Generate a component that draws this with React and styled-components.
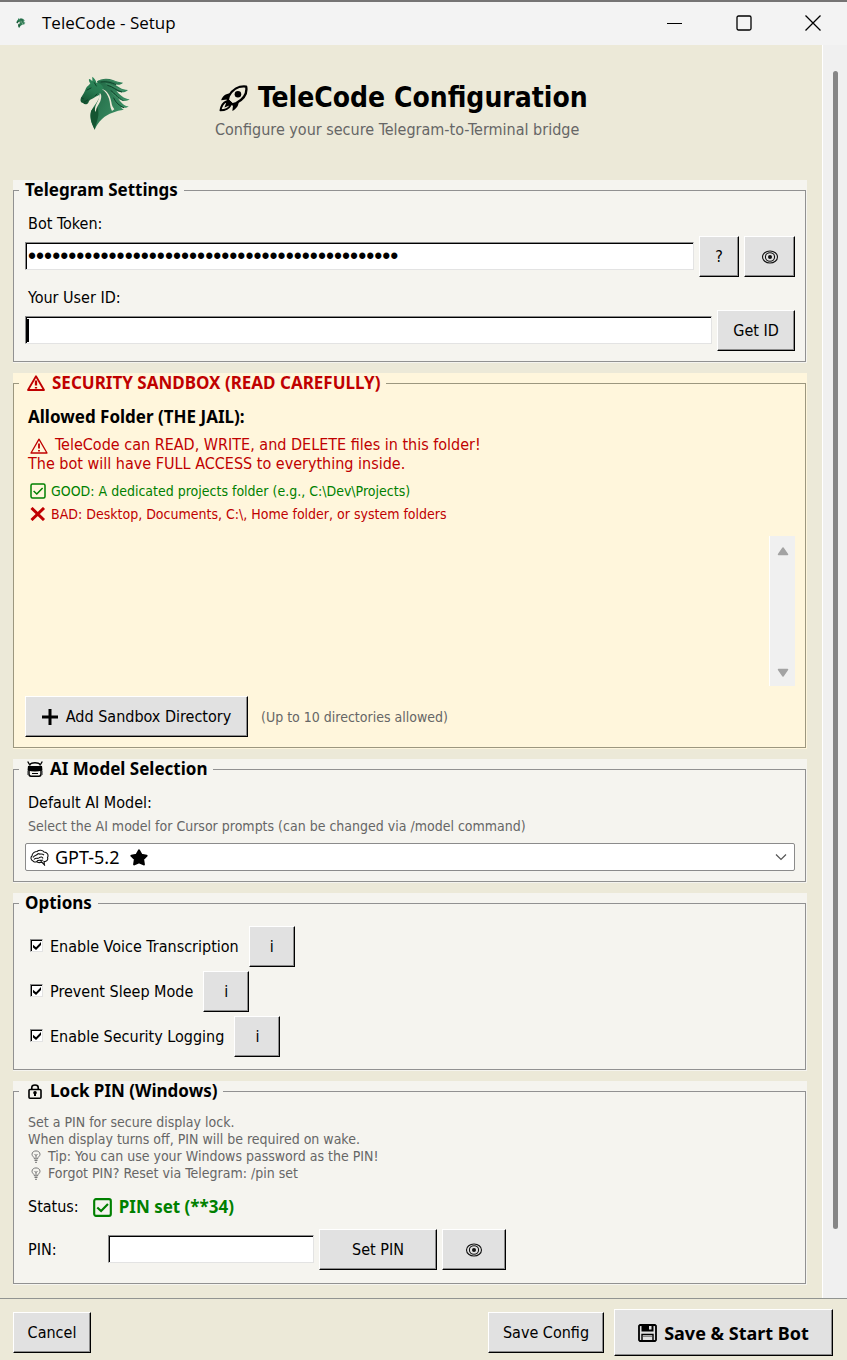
import React from "react";
import styled, { createGlobalStyle, css } from "styled-components";

const uiFont = `"DejaVu Sans Condensed", "DejaVu Sans", sans-serif`;
const boldFont = `"Noto Sans", "Open Sans", sans-serif`;

const GlobalStyle = createGlobalStyle`
  *, *::before, *::after { box-sizing: border-box; }
  html, body { margin: 0; padding: 0; }
  body {
    background: #ece9d8;
    color: #000;
    font-family: ${uiFont};
    font-size: 16px;
    line-height: 20px;
  }
  svg { display: block; flex: none; }
`;

const Window = styled.div`
  min-height: 100vh;
  display: flex;
  flex-direction: column;
`;

const TitleBar = styled.header`
  display: flex;
  align-items: center;
  height: 45px;
  padding: 0 24px 2px 16px;
  border-top: 2px solid #757474;
  background: #f3f3f3;
`;

const WindowTitle = styled.span`
  flex: 1;
  margin-left: 16px;
  font-family: "Open Sans", sans-serif;
  font-size: 17px;
  line-height: 24px;
`;

const WindowButtons = styled.div`
  display: flex;
  gap: 49px;
`;

const CaptionButton = styled.button`
  padding: 0;
  border: 0;
  background: none;
  width: 20px;
  height: 20px;
  display: grid;
  place-items: center;
`;

const Body = styled.div`
  flex: 1;
  display: flex;
`;

const Content = styled.main`
  flex: 1;
  min-width: 0;
  display: flex;
  flex-direction: column;
  gap: 10px;
  padding: 0 15px 13px 13px;
`;

const PageTrack = styled.div`
  display: flex;
  width: 25px;
  padding: 26px 9px 69px 10px;
  border-left: 1px solid #fff;
  background: #f0f0f0;
`;

const PageThumb = styled.div`
  flex: 1;
  border-radius: 3px;
  background: #868686;
`;

const Intro = styled.div`
  display: flex;
  gap: 84px;
  height: 125px;
  padding: 31px 0 0 66px;
`;

const Heading = styled.div`
  display: flex;
  flex-direction: column;
  gap: 5px;
  padding-top: 5px;
`;

const PageTitle = styled.h1`
  display: flex;
  align-items: center;
  gap: 10px;
  margin: 0 0 0 4px;
  font: bold 28px/34px ${uiFont};
  white-space: nowrap;
`;

const Subtitle = styled.p`
  margin: 0;
  color: #666;
  white-space: nowrap;
`;

const Panel = styled.section`
  padding: 0 1px 1px 0;
  background: ${(p) => (p.$warn ? "#fff6dc" : "#f5f4ef")};
`;

const Group = styled.fieldset`
  min-width: 0;
  margin: 0;
  padding: ${(p) => p.$top || 14}px 10px ${(p) => p.$bottom || 10}px 11px;
  border: 1px solid ${(p) => (p.$warn ? "#9c977f" : "#919191")};
`;

const Legend = styled.legend`
  display: flex;
  align-items: center;
  gap: 7px;
  height: 20px;
  margin-left: -6px;
  padding: 0 6px 0 ${(p) => (p.$icon ? 8 : 6)}px;
  font: bold 17px/20px ${boldFont};
  color: ${(p) => (p.$warn ? "#c00000" : "#000")};
`;

const FieldLabel = styled.label`
  display: block;
  margin: ${(p) => p.$top || 0}px 0 2px 3px;
`;

const StrongLabel = styled.p`
  margin: 0 0 8px 3px;
  font: bold 17px/20px ${boldFont};
`;

const FieldRow = styled.div`
  display: flex;
  align-items: center;
  gap: 5px;
  margin-top: ${(p) => p.$top || 0}px;
`;

const TextInput = styled.input`
  flex: ${(p) => (p.$width ? "none" : "1")};
  width: ${(p) => (p.$width ? p.$width + "px" : "auto")};
  min-width: 0;
  height: 28px;
  margin-bottom: 1px;
  padding: 0 2px;
  border: 1px solid;
  border-color: #8a8a8a #e3e3e3 #e3e3e3 #8a8a8a;
  border-radius: 0;
  background: #fff;
  box-shadow: inset 1px 1px 0 #000;
  font: 23px/24px "Liberation Sans", sans-serif;
  color: #000;
  outline: none;
`;

const CaretField = styled.div`
  flex: 1;
  display: flex;
  position: relative;
  &::after {
    content: "";
    position: absolute;
    left: 1px;
    top: 3px;
    bottom: 3px;
    width: 3px;
    background: #000;
  }
`;

const Button = styled.button`
  flex: none;
  display: flex;
  align-items: center;
  justify-content: center;
  gap: ${(p) => p.$gap || 0}px;
  width: ${(p) => p.$width}px;
  height: 41px;
  padding: 0;
  border: 1px solid;
  border-color: #fff #000 #000 #fff;
  border-radius: 0;
  background: #e1e1e1;
  box-shadow: inset -1px -1px 0 #8c8c8c;
  font: 16px/20px ${uiFont};
  color: #000;
  white-space: nowrap;
  ${(p) =>
    p.$primary &&
    css`
      height: 47px;
      font: bold 18px/24px ${boldFont};
    `}
`;

const Warning = styled.p`
  margin: 0 0 8px 3px;
  line-height: 19px;
  color: #c00000;
`;

const InlineIcon = styled.span`
  display: inline-block;
  vertical-align: -4px;
  margin: 0 7px 0 2px;
`;

const Advice = styled.p`
  display: flex;
  align-items: center;
  gap: 5px;
  margin: 0 0 3px 5px;
  font-size: 14px;
  color: ${(p) => p.$color};
`;

const FolderList = styled.div`
  display: flex;
  justify-content: flex-end;
  height: 150px;
  margin: 12px 0 10px;
`;

const ListTrack = styled.div`
  display: flex;
  flex-direction: column;
  align-items: center;
  justify-content: space-between;
  width: 26px;
  padding: 10px 0 8px;
  border-left: 1px solid #fff;
  background: #f0f0f0;
`;

const Hint = styled.span`
  margin-left: ${(p) => p.$left || 0}px;
  font-size: 14px;
  color: #666;
`;

const HintBlock = styled.p`
  margin: ${(p) => p.$top || 0}px 0 ${(p) => p.$bottom}px 3px;
  font-size: 14px;
  line-height: 17px;
  color: #666;
`;

const TipLine = styled.span`
  display: flex;
  align-items: center;
  gap: 7px;
  padding-left: 3px;
`;

const SelectBox = styled.div`
  position: relative;
  display: flex;
`;

const Select = styled.select`
  appearance: none;
  flex: 1;
  height: 28px;
  padding: 0 30px 0 29px;
  border: 1px solid #8b8b8b;
  border-radius: 2px;
  background: #fff;
  font: 18px/24px ${boldFont};
  color: #000;
`;

const SelectIcon = styled.span`
  position: absolute;
  top: 6px;
  ${(p) => (p.$right ? `right: ${p.$right}px;` : `left: ${p.$left}px;`)}
  pointer-events: none;
`;

const OptionList = styled.div`
  display: flex;
  flex-direction: column;
  gap: 4px;
`;

const OptionRow = styled.div`
  display: flex;
  align-items: center;
  gap: 10px;
  padding-left: 5px;
`;

const OptionLabel = styled.label`
  display: flex;
  align-items: center;
  gap: 7px;
`;

const Checkbox = styled.input`
  appearance: none;
  flex: none;
  width: 13px;
  height: 13px;
  margin: 0 0 2px;
  border: 1px solid;
  border-color: #8a8a8a #e3e3e3 #e3e3e3 #8a8a8a;
  box-shadow: inset 1px 1px 0 #000;
  background: #fff;
  display: grid;
  place-items: center;
  &:checked::after {
    content: "";
    width: 8px;
    height: 8px;
    margin: 1px 0 0 1px;
    background: #000;
    clip-path: polygon(0 35%, 38% 65%, 100% 0, 100% 38%, 38% 100%, 0 70%);
  }
`;

const StatusRow = styled.div`
  display: flex;
  align-items: center;
  margin: 0 0 12px 3px;
`;

const StatusValue = styled.strong`
  display: flex;
  align-items: center;
  gap: 7px;
  margin-left: 14px;
  font: bold 17px/20px ${boldFont};
  color: #008000;
`;

const PinLabel = styled.label`
  width: 75px;
  margin-left: 3px;
`;

const Footer = styled.footer`
  display: flex;
  align-items: center;
  gap: 10px;
  padding: 10px 14px 4px 13px;
  border-top: 1px solid #919491;
`;

const Spacer = styled.div`
  flex: 1;
`;

function Horse({ size = 52 }) {
  return (
    <svg width={size} height={Math.round(size * 1.04)} viewBox="0 0 156 162" aria-hidden="true">
      <defs>
        <linearGradient id="coat" x1="0.7" y1="0" x2="0.3" y2="1">
          <stop offset="0" stopColor="#2e8a5c" />
          <stop offset="0.5" stopColor="#277a50" />
          <stop offset="1" stopColor="#145431" />
        </linearGradient>
        <linearGradient id="mane" x1="0" y1="0" x2="1" y2="0.6">
          <stop offset="0" stopColor="#1c6240" />
          <stop offset="1" stopColor="#3f9468" />
        </linearGradient>
      </defs>
      <path
        fill="url(#mane)"
        d="M54 16C66 7 86 6 102 12C112 16 122 19 132 20C126 27 116 28 104 24C116 30 128 42 147 42C138 52 124 50 112 44C122 56 134 68 152 70C142 78 130 76 118 68C126 80 136 90 149 91C143 97 134 96 126 94C130 98 132 101 135 101C112 104 88 112 70 128C59 138 52 148 47 161C42 149 34 138 34 118C36 96 52 86 62 62L60 40Z"
      />
      <path
        fill="url(#coat)"
        d="M40 2C46 7 51 12 52 20C66 22 74 30 74 42C70 50 66 52 62 56C58 58 52 60 44 66C36 70 30 72 28 80C24 86 16 86 12 81C5 80 3 72 6 65C12 56 18 46 21 37C24 31 31 27 34 22C30 18 29 12 30 9C34 10 37 13 40 15C41 11 39 6 40 2Z"
      />
      <path fill="#145431" d="M36 105C46 90 58 86 58 108C60 122 52 140 47 161C40 146 32 130 36 105Z" />
      <path fill="#ece9d8" d="M62 52C68 54 68 64 64 76C58 88 52 94 50 108C44 98 52 84 57 74C60 66 62 60 62 52Z" />
      <path fill="#ece9d8" d="M68 38C86 44 94 60 97 78C98 88 102 94 106 100L99 105C92 92 94 80 90 68C86 56 80 46 68 38Z" />
      <path
        fill="none"
        stroke="#10422a"
        strokeWidth="3"
        strokeLinecap="round"
        d="M24 42L36 36M8 66L13 68M16 78L26 72M66 18C84 15 98 20 110 26M86 28C104 32 110 44 128 48M96 44C108 52 112 64 132 73M104 66C110 80 122 90 134 95M46 20L52 30M48 60L54 54"
      />
      <path fill="none" stroke="#66b48a" strokeWidth="1" d="M60 14C80 8 100 14 118 20M80 22C100 26 118 42 134 44M98 50C112 66 126 72 140 72" />
    </svg>
  );
}

function Rocket() {
  return (
    <svg width="29" height="27" viewBox="0 0 87 82" aria-hidden="true">
      <path d="M82 5C60 2 40 14 29 34L26 46L40 59L52 55C72 44 86 26 82 5Z" fill="none" stroke="#000" strokeWidth="7" strokeLinejoin="round" />
      <circle cx="57" cy="28" r="10" />
      <path d="M34 26C20 26 10 34 6 46L24 44L42 62L40 79C52 72 60 62 59 50L42 58L27 44Z" />
      <path d="M22 50C10 54 6 66 4 77C16 77 28 74 34 62Z" fill="none" stroke="#000" strokeWidth="6" strokeLinejoin="round" />
      <path d="M26 42L16 68L42 58Z" />
    </svg>
  );
}

function Eye() {
  return (
    <svg width="18" height="14" viewBox="0 0 18 14" fill="none" stroke="#111" aria-hidden="true">
      <ellipse cx="9" cy="7" rx="7.500" ry="6" strokeWidth="1.100" />
      <ellipse cx="9" cy="7" rx="4.600" ry="4.200" strokeWidth="1.100" />
      <circle cx="9" cy="7" r="2" fill="#111" stroke="none" />
    </svg>
  );
}

function Alert({ weight = 1.3 }) {
  return (
    <svg width="18" height="16" viewBox="0 0 18 16" fill="none" stroke="#c00000" aria-hidden="true">
      <path d="M9 1.2L17 15H1Z" strokeWidth={weight} strokeLinejoin="round" />
      <path d="M9 5.5V10.5M9 12V13.6" strokeWidth={weight + 0.5} />
    </svg>
  );
}

function CheckedBox({ size = 16, weight = 1.5 }) {
  return (
    <svg width={size} height={size} viewBox="0 0 16 16" fill="none" stroke="#008000" strokeWidth={weight} aria-hidden="true">
      <rect x="1" y="1" width="14" height="14" rx="1.5" />
      <path d="M3.6 8L6.8 11L12.6 5" />
    </svg>
  );
}

function Cross() {
  return (
    <svg width="16" height="14" viewBox="0 0 16 14" stroke="#c00000" strokeWidth="3" aria-hidden="true">
      <path d="M1.5 1L14 13M14 1L1.5 13" />
    </svg>
  );
}

function Plus() {
  return (
    <svg width="16" height="16" viewBox="0 0 16 16" stroke="#000" strokeWidth="3" aria-hidden="true">
      <path d="M8 0V16M0 8H16" />
    </svg>
  );
}

function Robot() {
  return (
    <svg width="16" height="16" viewBox="0 0 16 16" aria-hidden="true">
      <path d="M0.700 0.500L2.500 3.500M15.300 0.500L13.500 3.500" stroke="#000" strokeWidth="1.300" />
      <path d="M2.500 4.500C3.500 0.800 12.500 0.800 13.500 4.500" fill="none" stroke="#000" strokeWidth="1.500" />
      <path d="M1 5H15L15.500 9.500Q8 11.500 0.500 9.500Z" />
      <path d="M2 9V13Q2 15.200 4 15.200H12Q14 15.200 14 13V9" fill="none" stroke="#000" strokeWidth="1.500" />
      <path d="M5 12.500H11" stroke="#000" />
      <path d="M0.500 10V14M15.500 10V14" stroke="#888" />
    </svg>
  );
}

function Brain() {
  return (
    <svg width="19" height="17" viewBox="0 0 19 17" fill="none" stroke="#111" strokeWidth="1.1" aria-hidden="true">
      <path d="M3 12C0.500 11 0.500 8 2 7C2 4 5 2.500 7 2.500C9 0.500 13 1 14 3C17 3 19 6 17.500 8.500C18.500 11 16 13 14 12.500L14.500 16L11.500 12.800C9 14.500 7 13 7 12.500C5 13.500 3.500 13 3 12Z" />
      <path d="M3 8.500C5 5.500 7 7 8 4.500M8 4.500C10 6 11.500 4 14 6M4 10.500C6 8 8 10.500 9.500 8.500C11 7.500 12.500 8 13 9.500M7 12C9 10.500 11 12 13 11" />
    </svg>
  );
}

function Star() {
  return (
    <svg width="18" height="17" viewBox="0 0 18 17" aria-hidden="true">
      <path d="M9 1.500L11.400 5.800L16.500 6.800L13 10.200L13.800 15.300L9 13.200L4.200 15.300L5 10.200L1.500 6.800L6.600 5.800Z" stroke="#000" strokeWidth="2.200" strokeLinejoin="round" />
    </svg>
  );
}

function Chevron() {
  return (
    <svg width="12" height="16" viewBox="0 0 12 16" fill="none" stroke="#555" strokeWidth="1.200" aria-hidden="true">
      <path d="M1 5.500L6 10.500L11 5.500" />
    </svg>
  );
}

function Padlock() {
  return (
    <svg width="16" height="15" viewBox="0 0 16 15" fill="none" stroke="#000" strokeWidth="1.600" aria-hidden="true">
      <rect x="2" y="5.500" width="12" height="8.700" rx="1" />
      <path d="M4.800 5.500V3.500C4.800 0.200 11.200 0.200 11.200 3.500V5.500" />
      <path d="M8 8V12" strokeWidth="2" />
      <circle cx="8" cy="8.800" r="1" fill="#000" />
    </svg>
  );
}

function Bulb() {
  return (
    <svg width="10" height="13" viewBox="0 0 10 13" fill="none" stroke="#777" strokeWidth="1" aria-hidden="true">
      <path d="M3.500 9C3.500 7 1 6.500 1 4.300C1 -0.200 9 -0.200 9 4.300C9 6.500 6.500 7 6.500 9Z" />
      <path d="M5 9V5M3.500 4L5 5.500L6.500 4M3.500 10.500H6.500M4 12.300H6" />
    </svg>
  );
}

function Floppy() {
  return (
    <svg width="19" height="18" viewBox="0 0 19 18" aria-hidden="true">
      <path d="M2 1H17L18 2V16L17 17H2L1 16V2Z" fill="#e1e1e1" stroke="#000" strokeWidth="1.800" strokeLinejoin="round" />
      <path d="M3.500 1H15.500V7.500H3.500Z" />
      <rect x="11" y="2" width="2.500" height="3.500" fill="#e1e1e1" />
      <path d="M4 17V10.500H15V17" fill="none" stroke="#000" strokeWidth="1.400" />
      <path d="M5 12.500H14" stroke="#888" />
    </svg>
  );
}

function Arrow({ down }) {
  return (
    <svg width="12" height="10" viewBox="0 0 12 10" aria-hidden="true">
      <path d={down ? "M1.500 1.500H10.500L6 8Z" : "M1.500 8.500H10.500L6 2Z"} fill="#a3a3a3" stroke="#a3a3a3" strokeWidth="1.500" strokeLinejoin="round" />
    </svg>
  );
}

const options = [
  { id: "voice", label: "Enable Voice Transcription" },
  { id: "sleep", label: "Prevent Sleep Mode" },
  { id: "logging", label: "Enable Security Logging" },
];

export default function App() {
  return (
    <Window>
      <GlobalStyle />
      <TitleBar>
        <Horse size={10} />
        <WindowTitle>TeleCode - Setup</WindowTitle>
        <WindowButtons>
          <CaptionButton aria-label="Minimize">
            <svg width="16" height="16" viewBox="0 0 16 16" stroke="#000">
              <path d="M0 8.500H15" />
            </svg>
          </CaptionButton>
          <CaptionButton aria-label="Maximize">
            <svg width="16" height="16" viewBox="0 0 16 16" fill="none" stroke="#000" strokeWidth="1.300">
              <rect x="1" y="1" width="14" height="14" rx="1.500" />
            </svg>
          </CaptionButton>
          <CaptionButton aria-label="Close">
            <svg width="16" height="16" viewBox="0 0 16 16" stroke="#000" strokeWidth="1.300">
              <path d="M0.500 0.500L15.500 15.500M15.500 0.500L0.500 15.500" />
            </svg>
          </CaptionButton>
        </WindowButtons>
      </TitleBar>

      <Body>
        <Content>
          <Intro>
            <Horse />
            <Heading>
              <PageTitle>
                <Rocket />
                TeleCode Configuration
              </PageTitle>
              <Subtitle>Configure your secure Telegram-to-Terminal bridge</Subtitle>
            </Heading>
          </Intro>

          <Panel>
            <Group>
              <Legend>Telegram Settings</Legend>
              <FieldLabel htmlFor="token">Bot Token:</FieldLabel>
              <FieldRow>
                <TextInput id="token" type="password" defaultValue={"0".repeat(46)} />
                <Button $width={40}>?</Button>
                <Button $width={51} aria-label="Show token">
                  <Eye />
                </Button>
              </FieldRow>
              <FieldLabel htmlFor="user" $top={11}>
                Your User ID:
              </FieldLabel>
              <FieldRow>
                <CaretField>
                  <TextInput id="user" type="text" />
                </CaretField>
                <Button $width={78}>Get ID</Button>
              </FieldRow>
            </Group>
          </Panel>

          <Panel $warn>
            <Group $warn>
              <Legend $icon $warn>
                <Alert weight={1.8} />
                SECURITY SANDBOX (READ CAREFULLY)
              </Legend>
              <StrongLabel>Allowed Folder (THE JAIL):</StrongLabel>
              <Warning>
                <InlineIcon>
                  <Alert />
                </InlineIcon>
                TeleCode can READ, WRITE, and DELETE files in this folder!
                <br />
                The bot will have FULL ACCESS to everything inside.
              </Warning>
              <Advice $color="#008000">
                <CheckedBox />
                GOOD: A dedicated projects folder (e.g., C:\Dev\Projects)
              </Advice>
              <Advice $color="#c00000">
                <Cross />
                BAD: Desktop, Documents, C:\, Home folder, or system folders
              </Advice>
              <FolderList>
                <ListTrack>
                  <Arrow />
                  <Arrow down />
                </ListTrack>
              </FolderList>
              <FieldRow>
                <Button $width={223} $gap={8}>
                  <Plus />
                  Add Sandbox Directory
                </Button>
                <Hint $left={8}>(Up to 10 directories allowed)</Hint>
              </FieldRow>
            </Group>
          </Panel>

          <Panel>
            <Group>
              <Legend $icon>
                <Robot />
                AI Model Selection
              </Legend>
              <FieldLabel htmlFor="model">Default AI Model:</FieldLabel>
              <HintBlock $top={5} $bottom={8}>
                Select the AI model for Cursor prompts (can be changed via /model command)
              </HintBlock>
              <SelectBox>
                <Select id="model" defaultValue="gpt">
                  <option value="gpt">GPT-5.2</option>
                </Select>
                <SelectIcon $left={5}>
                  <Brain />
                </SelectIcon>
                <SelectIcon $left={105}>
                  <Star />
                </SelectIcon>
                <SelectIcon $right={8}>
                  <Chevron />
                </SelectIcon>
              </SelectBox>
            </Group>
          </Panel>

          <Panel>
            <Group $top={13} $bottom={12}>
              <Legend>Options</Legend>
              <OptionList>
                {options.map((o) => (
                  <OptionRow key={o.id}>
                    <OptionLabel htmlFor={o.id}>
                      <Checkbox id={o.id} type="checkbox" defaultChecked />
                      {o.label}
                    </OptionLabel>
                    <Button $width={46}>i</Button>
                  </OptionRow>
                ))}
              </OptionList>
            </Group>
          </Panel>

          <Panel>
            <Group $top={13} $bottom={13}>
              <Legend $icon>
                <Padlock />
                Lock PIN (Windows)
              </Legend>
              <HintBlock $bottom={15}>
                Set a PIN for secure display lock.
                <br />
                When display turns off, PIN will be required on wake.
                <TipLine>
                  <Bulb />
                  Tip: You can use your Windows password as the PIN!
                </TipLine>
                <TipLine>
                  <Bulb />
                  Forgot PIN? Reset via Telegram: /pin set
                </TipLine>
              </HintBlock>
              <StatusRow>
                Status:
                <StatusValue>
                  <CheckedBox size={19} weight={1.8} />
                  PIN set (**34)
                </StatusValue>
              </StatusRow>
              <FieldRow>
                <PinLabel htmlFor="pin">PIN:</PinLabel>
                <TextInput id="pin" type="password" $width={206} />
                <Button $width={118}>Set PIN</Button>
                <Button $width={64} aria-label="Show PIN">
                  <Eye />
                </Button>
              </FieldRow>
            </Group>
          </Panel>
        </Content>
        <PageTrack>
          <PageThumb />
        </PageTrack>
      </Body>

      <Footer>
        <Button $width={78}>Cancel</Button>
        <Spacer />
        <Button $width={116}>Save Config</Button>
        <Button $width={219} $gap={7} $primary>
          <Floppy />
          Save &amp; Start Bot
        </Button>
      </Footer>
    </Window>
  );
}
